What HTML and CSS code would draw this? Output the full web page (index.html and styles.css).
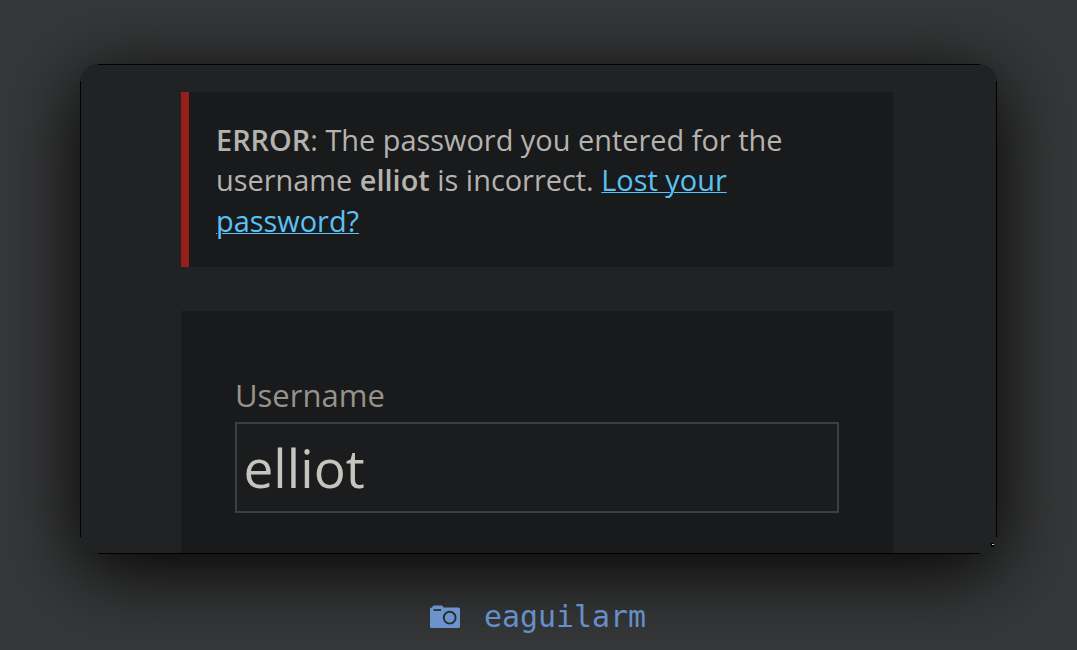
FILE: index.html
```html
<!DOCTYPE html>
<html lang="en">
<head>
<meta charset="utf-8">
<title>Log In</title>
<link rel="stylesheet" href="styles.css">
</head>
<body>
<main class="window">
  <div class="notice"><strong>ERROR</strong>: The password you entered for the<br>username <strong>elliot</strong> is incorrect. <a class="lost" href="#">Lost your<br>password?</a></div>
  <form class="login">
    <label class="label" for="user">Username</label>
    <input class="field" id="user" type="text" value="elliot">
  </form>
  <span class="cursor"></span>
</main>
<footer class="credit">
  <svg class="camera" viewBox="0 0 30 24" aria-hidden="true">
    <path fill="#6b94cd" d="M2 2.5 3 1Q3.400 .5 4 .5H11.500Q12.200 .5 12.600 1L13.500 2.500H28.500Q30 2.500 30 4V21.500Q30 23 28.500 23H1.500Q0 23 0 21.500V4Q0 2.500 2 2.500Z"/>
    <path stroke="#292b2c" stroke-width="1.700" d="M3.500 5H11"/>
    <circle cx="19.700" cy="12.700" r="5.900" fill="none" stroke="#292b2c" stroke-width="1.900"/>
  </svg>
  <span>eaguilarm</span>
</footer>
</body>
</html>
```
FILE: styles.css
```css
* { box-sizing: border-box; }
body {
  margin: 0;
  height: 650px;
  padding-top: 64px;
  display: flex;
  flex-direction: column;
  align-items: center;
  overflow: hidden;
  background: #363738;
  font-family: "Open Sans", "Noto Sans", sans-serif;
}
.window {
  position: relative;
  width: 917px;
  height: 490px;
  flex: none;
  padding: 28px 104px 0 101px;
  display: flex;
  flex-direction: column;
  gap: 44px;
  border-radius: 18px;
  background:
    linear-gradient(#000, #000) 18px 0 / 882px 1px no-repeat,
    linear-gradient(#000, #000) 18px 100% / 882px 1px no-repeat,
    linear-gradient(#000, #000) 0 17px / 1px 456px no-repeat,
    linear-gradient(#000, #000) 100% 17px / 1px 456px no-repeat,
    #212223;
  box-shadow: 0 15px 76px rgba(0, 0, 0, .97);
}
.notice {
  height: 175px;
  flex: none;
  padding: 28.200px 27px;
  border-left: 8px solid #961f1b;
  background: #191a1b;
  color: #b5b3af;
  font-size: 28.920px;
  line-height: 40.300px;
  white-space: nowrap;
}
.notice strong { font-weight: 600; }
.lost {
  color: #59c2f5;
  text-decoration-thickness: 1px;
}
.login {
  height: 242px;
  flex: none;
  padding: 63px 54px 0;
  background: #191a1b;
}
.label {
  display: block;
  height: 48px;
  color: #98938a;
  font-size: 31px;
  line-height: 43px;
}
.field {
  display: block;
  width: 604px;
  height: 91px;
  padding: 0 6.500px;
  border: 2px solid #3c3e3f;
  background: #1b1c1d;
  color: #c5c4bd;
  font: 53.200px "Open Sans", "Noto Sans", sans-serif;
  outline: 0;
}
.cursor {
  position: absolute;
  right: 3px;
  bottom: 7px;
  width: 3px;
  height: 4px;
  background: linear-gradient(#ccc, #ccc) 1px 1px / 2px 1px no-repeat, #000;
}
/* Stacked above the window's shadow. */
.credit {
  position: relative;
  display: flex;
  align-items: center;
  gap: 24px;
  margin-top: 39px;
  padding-right: 1px;
  height: 46px;
  color: #668fc9;
  font: 29.900px "DejaVu Sans Mono", monospace;
}
.camera {
  width: 30px;
  height: 24px;
  margin-top: 2px;
}
```
